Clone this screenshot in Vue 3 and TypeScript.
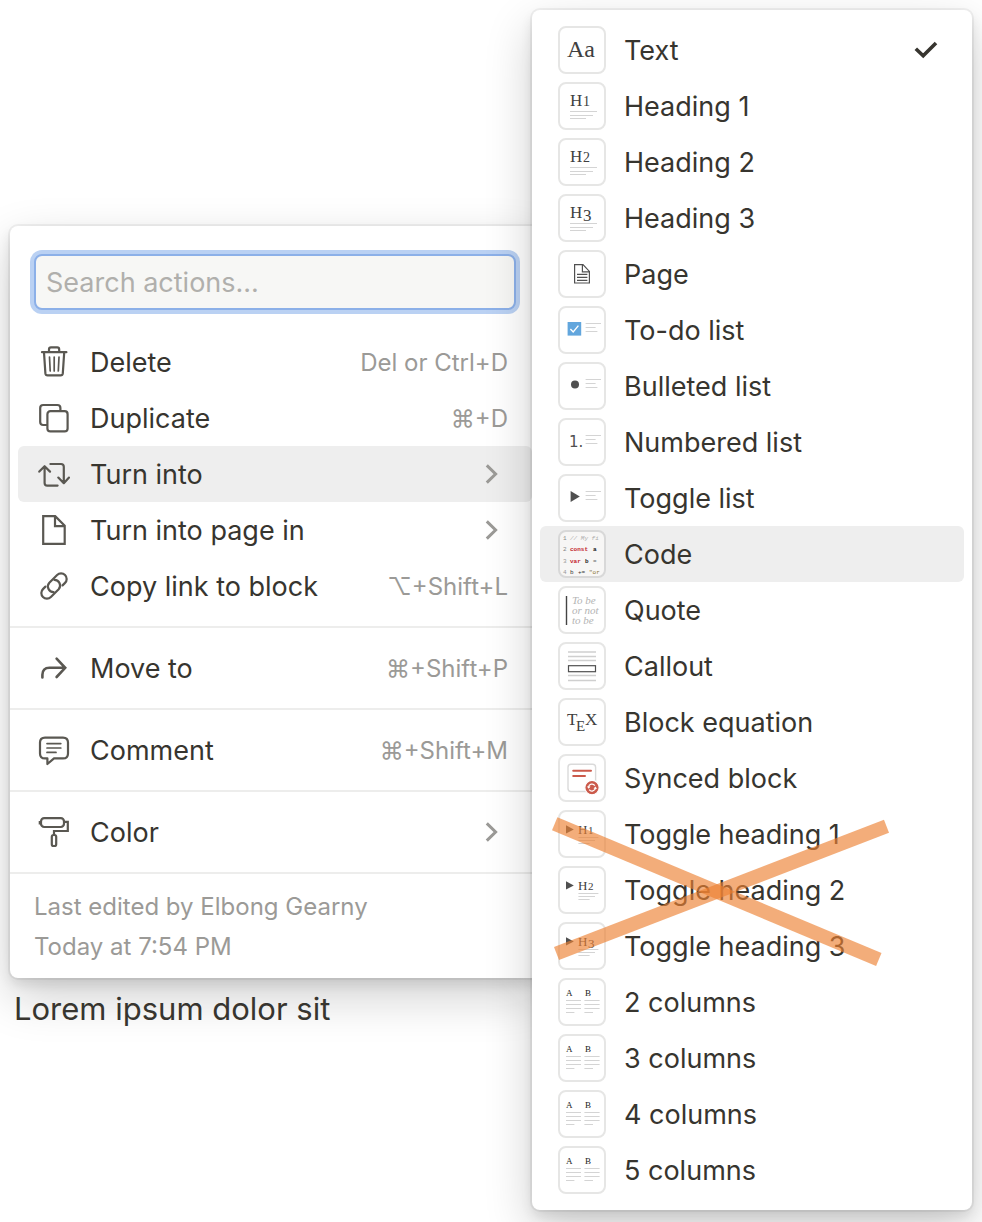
<script setup lang="ts">
import { ref } from 'vue'

interface Action {
  id: string
  label: string
  hint?: string
  submenu?: boolean
}

interface BlockType {
  label: string
  icon: string
  mark?: string
}

const query = ref('')
const openAction = ref('turn')
const selected = ref('Text')
const hovered = ref('Code')

const sections: Action[][] = [
  [
    { id: 'delete', label: 'Delete', hint: 'Del or Ctrl+D' },
    { id: 'duplicate', label: 'Duplicate', hint: '⌘+D' },
    { id: 'turn', label: 'Turn into', submenu: true },
    { id: 'page', label: 'Turn into page in', submenu: true },
    { id: 'link', label: 'Copy link to block', hint: '⌥+Shift+L' },
  ],
  [{ id: 'move', label: 'Move to', hint: '⌘+Shift+P' }],
  [{ id: 'comment', label: 'Comment', hint: '⌘+Shift+M' }],
  [{ id: 'color', label: 'Color', submenu: true }],
]

const blocks: BlockType[] = [
  { label: 'Text', icon: 'text' },
  { label: 'Heading 1', icon: 'heading', mark: '1' },
  { label: 'Heading 2', icon: 'heading', mark: '2' },
  { label: 'Heading 3', icon: 'heading', mark: '3' },
  { label: 'Page', icon: 'page' },
  { label: 'To-do list', icon: 'todo' },
  { label: 'Bulleted list', icon: 'bullet' },
  { label: 'Numbered list', icon: 'number' },
  { label: 'Toggle list', icon: 'toggle' },
  { label: 'Code', icon: 'code' },
  { label: 'Quote', icon: 'quote' },
  { label: 'Callout', icon: 'callout' },
  { label: 'Block equation', icon: 'tex' },
  { label: 'Synced block', icon: 'synced' },
  { label: 'Toggle heading 1', icon: 'toggleHeading', mark: '1' },
  { label: 'Toggle heading 2', icon: 'toggleHeading', mark: '2' },
  { label: 'Toggle heading 3', icon: 'toggleHeading', mark: '3' },
  { label: '2 columns', icon: 'columns' },
  { label: '3 columns', icon: 'columns' },
  { label: '4 columns', icon: 'columns' },
  { label: '5 columns', icon: 'columns' },
]

const listIcons = ['todo', 'bullet', 'number', 'toggle']
</script>

<template>
  <main class="page">
    <div class="left">
      <section class="panel actions" aria-label="Block actions">
        <input v-model="query" class="search" type="text" placeholder="Search actions..." aria-label="Search actions" />
        <ul v-for="(section, i) in sections" :key="i" class="section">
          <li v-for="a in section" :key="a.id">
            <button type="button" class="row action" :class="{ active: openAction === a.id }" @click="openAction = a.id">
              <svg class="glyph" viewBox="0 0 32 32" aria-hidden="true">
                <g v-if="a.id === 'delete'">
                  <path d="M4 6.2H28.4M11 6V3.4Q11 1.4 13 1.4H19.2Q21.2 1.4 21.2 3.4V6M6 6.5L7.4 27.4Q7.6 29.4 9.6 29.4H22.6Q24.6 29.4 24.8 27.4L26.2 6.5" />
                  <path class="thin" d="M11.5 11L12.2 25M16.2 11V25M21 11L20.3 25" />
                </g>
                <g v-else-if="a.id === 'duplicate'">
                  <path d="M8.5 23H5.2Q2.2 23 2.2 20V6Q2.2 3 5.2 3H19.4Q22.4 3 22.4 6V9" />
                  <rect x="9.4" y="9.2" width="20.2" height="20.2" rx="3" />
                </g>
                <g v-else-if="a.id === 'turn'">
                  <path d="M1.3 13.6L6.6 8.2L12 13.6M6.6 9V25Q6.6 27.6 9.2 27.6H19.6M12.4 6H23Q25.8 6 25.8 8.8V25M20.3 19.6L25.8 25.2L31 19.6" />
                </g>
                <g v-else-if="a.id === 'page'" class="sharp">
                  <path d="M5.2 2.2H17.2L26.7 11.8V29.8H5.2ZM17 2.6V12.2H26.6" />
                </g>
                <g v-else-if="a.id === 'link'" transform="translate(16 16) rotate(-45)">
                  <path d="M6.5 5.6H10A5.6 5.6 0 0 0 10-5.6H-1A5.6 5.6 0 0 0-4.6 4" />
                  <path d="M-6.5-5.6H-10A5.6 5.6 0 0 0-10 5.6H1A5.6 5.6 0 0 0 4.6-4" />
                </g>
                <g v-else-if="a.id === 'move'" class="heavy">
                  <path d="M4.4 25.4V22.8Q4.4 15.8 11.4 15.8H26.6M18.6 6.6L27.2 15.8L18.6 25" />
                </g>
                <g v-else-if="a.id === 'comment'">
                  <path d="M7 3.6H25Q30 3.6 30 8.6V19.4Q30 24.4 25 24.4H16L9.4 30V24.4H7Q2 24.4 2 19.4V8.6Q2 3.6 7 3.6Z" />
                  <path class="thin" d="M9 9.6H22.8M9 14H22.8M9 18.4H18" />
                </g>
                <g v-else>
                  <rect x="3" y="2.2" width="23" height="8.8" rx="3.2" />
                  <path class="sharp" d="M1.8 5V8.4M26.2 5.8H29.8V15H16V19" />
                  <rect x="13.8" y="19" width="4.4" height="11" rx="1.8" />
                </g>
              </svg>
              <span class="label">{{ a.label }}</span>
              <kbd v-if="a.hint" class="hint">{{ a.hint }}</kbd>
              <svg v-if="a.submenu" class="chevron" viewBox="0 0 14 22" aria-hidden="true">
                <path d="M2.8 2.4L11.6 11L2.8 19.6" />
              </svg>
            </button>
          </li>
        </ul>
        <footer class="edited">
          <div>Last edited by Elbong Gearny</div>
          <div>Today at 7:54 PM</div>
        </footer>
      </section>
      <p class="body-text">Lorem ipsum dolor sit</p>
    </div>

    <ul class="panel blocks" aria-label="Turn into">
      <li v-for="b in blocks" :key="b.label" class="block-item">
        <button type="button" class="row block" :class="{ active: hovered === b.label }" @click="selected = b.label">
          <span class="tile" :class="{ shaded: b.icon === 'code' }">
            <svg viewBox="2 2 44 44" aria-hidden="true">
              <g v-if="b.icon === 'text'">
                <text class="serif" x="9" y="31" font-size="24">Aa</text>
              </g>
              <g v-else-if="b.icon === 'heading'">
                <text class="serif" x="12" y="24" font-size="17">H</text>
                <text class="serif" x="25" :y="b.mark === '3' ? 27 : 24" :font-size="b.mark === '3' ? 17 : 14">{{ b.mark }}</text>
                <path class="rule" d="M12 29.5H39M12 33.5H35M12 36.5H28" />
              </g>
              <g v-else-if="b.icon === 'page'">
                <path class="ink" d="M16.6 14.6H25L31.4 21.4V33H16.6ZM24.4 15V21.8H31" />
                <path class="ink" d="M19 24.4H29.4M19 27.4H29.4M19 30.4H29.4" />
              </g>
              <g v-else-if="listIcons.includes(b.icon)">
                <g v-if="b.icon === 'todo'">
                  <rect x="9.6" y="16" width="13.6" height="13.6" fill="#62a6dd" />
                  <path d="M12.4 23L15.2 26L20.4 19.6" fill="none" stroke="#fff" stroke-width="1.4" />
                </g>
                <circle v-else-if="b.icon === 'bullet'" cx="17" cy="22.4" r="4" fill="#505050" />
                <text v-else-if="b.icon === 'number'" class="digit" x="11" y="29" font-size="15">1.</text>
                <path v-else d="M12.6 17V28L21.8 22.5Z" fill="#505050" />
                <path class="rule" d="M27.6 17.5H43M27.6 21.5H37.6M27.6 25.5H39.4" />
              </g>
              <g v-else-if="b.icon === 'code'" class="code">
                <text x="5" y="10"><tspan fill="#888">1</tspan><tspan x="12" fill="#aaa" font-style="italic">// My fi</tspan></text>
                <text x="5" y="21"><tspan fill="#888">2</tspan><tspan x="12" fill="#c4262e" font-weight="bold">const</tspan><tspan x="35" fill="#222" font-weight="bold">a</tspan></text>
                <text x="5" y="33"><tspan fill="#999">3</tspan><tspan x="12" fill="#c4262e" font-weight="bold">var</tspan><tspan x="27" fill="#222" font-weight="bold">b</tspan><tspan x="35" fill="#666">=</tspan></text>
                <text x="5" y="44"><tspan fill="#999">4</tspan><tspan x="12" fill="#333">b</tspan><tspan x="20" fill="#333">+=</tspan><tspan x="31" fill="#8a7430">"or</tspan></text>
              </g>
              <g v-else-if="b.icon === 'quote'">
                <path d="M8.5 10V39" stroke="#444" stroke-width="1.4" />
                <g class="serif verse" font-size="11">
                  <text x="14" y="18">To be</text>
                  <text x="14" y="28">or not</text>
                  <text x="14" y="38">to be</text>
                </g>
              </g>
              <g v-else-if="b.icon === 'callout'">
                <path class="rule bold" d="M10 10H38M10 14.5H38M10 18.5H38M10 33.5H38M10 38.5H38" />
                <rect class="ink" x="10.5" y="23.7" width="27" height="6" />
              </g>
              <g v-else-if="b.icon === 'tex'">
                <text class="serif" y="27" font-size="17"><tspan x="9">T</tspan><tspan x="18" y="33" font-size="15">E</tspan><tspan x="27" y="27">X</tspan></text>
              </g>
              <g v-else-if="b.icon === 'synced'">
                <rect x="10" y="10.3" width="27.6" height="27.2" rx="3" fill="none" stroke="#dadada" stroke-width="1.4" />
                <path d="M15.2 16.8H33M15.2 22H27" stroke="#cb5a4b" stroke-width="2" stroke-linecap="round" />
                <circle cx="34" cy="33.6" r="7.2" fill="#cb5a4b" stroke="#fff" stroke-width="1.2" />
                <path d="M30.6 33.2A3.4 3.4 0 0 1 36.8 31.6M37.4 34A3.4 3.4 0 0 1 31.2 35.6" fill="none" stroke="#fff" stroke-width="1.3" />
                <path d="M28.9 32.4H32.5L30.7 34.8ZM39.1 34.8H35.5L37.3 32.4Z" fill="#fff" />
              </g>
              <g v-else-if="b.icon === 'toggleHeading'">
                <path d="M8 15.2V23.6L15.8 19.4Z" fill="#505050" />
                <text class="serif" x="20" y="24" font-size="13">H</text>
                <text class="serif" x="30" :y="b.mark === '3' ? 26 : 24" :font-size="b.mark === '3' ? 13 : 11">{{ b.mark }}</text>
                <path class="rule" d="M20.4 27.5H40.4M20.4 30.5H37M20.4 33.5H31.6" />
              </g>
              <g v-else>
                <text class="serif letter" x="8" y="18" font-size="9">A</text>
                <text class="serif letter" x="27" y="18" font-size="9">B</text>
                <path class="rule" d="M8 22.5H23M8 26.5H23M8 30.5H23M8 34.5H16.4M26.4 22.5H41.6M26.4 26.5H41.6M26.4 30.5H41.6M26.4 34.5H35" />
              </g>
            </svg>
          </span>
          <span class="label">{{ b.label }}</span>
          <svg v-if="selected === b.label" class="check" viewBox="0 0 24 24" aria-hidden="true">
            <path d="M1.8 10.8L9.2 17.8L22 5" />
          </svg>
        </button>
        <svg v-if="b.label === 'Toggle heading 1'" class="cross" viewBox="0 0 350 168" aria-hidden="true">
          <path d="M14.7 17.8L338.8 153.5" />
          <path d="M16.5 147.5L346.5 20.2" />
        </svg>
      </li>
    </ul>
  </main>
</template>

<style>
body {
  margin: 0;
  background: #fff;
}
</style>

<style scoped>
.page {
  display: grid;
  grid-template-columns: 265fr 216fr;
  align-items: start;
  padding: 10px 10px 12px;
  color: #37352f;
  font-family: Inter, "Liberation Sans", "DejaVu Sans", sans-serif;
  font-size: 27px;
  overflow: hidden;
}

.left {
  padding-top: 216px;
}

.panel {
  background: #fff;
  border-radius: 8px;
  box-shadow:
    0 0 0 2px rgba(15, 15, 15, 0.05),
    0 6px 12px rgba(15, 15, 15, 0.1),
    0 18px 48px rgba(15, 15, 15, 0.2);
}

ul {
  list-style: none;
  margin: 0;
  padding: 0;
}

.actions {
  display: flex;
  flex-direction: column;
  padding-top: 28px;
}

.search {
  height: 56px;
  margin: 0 24px 12px;
  padding: 0 10px;
  box-sizing: border-box;
  border: 2px solid #8cb0e8;
  border-radius: 8px;
  outline: none;
  box-shadow: 0 0 0 4px #bad1f3;
  background: #f7f7f5;
  color: inherit;
  font: inherit;
}

.search::placeholder {
  color: #b0afac;
  opacity: 1;
}

.section {
  padding: 12px 8px;
}

.section + .section,
.edited {
  border-top: 2px solid #ededec;
}

.row {
  display: flex;
  align-items: center;
  width: 100%;
  height: 56px;
  border: 0;
  border-radius: 6px;
  background: none;
  color: inherit;
  font: inherit;
  text-align: left;
  cursor: pointer;
}

.row.active {
  background: #eeeeee;
}

.action {
  gap: 20px;
  padding: 0 24px 0 20px;
}

.block {
  gap: 18px;
  padding: 0 26px 0 18px;
}

.label {
  flex: 1;
  font-weight: 420;
  white-space: nowrap;
}

.hint {
  color: #9b9a97;
  font-family: inherit;
  font-size: 24px;
  white-space: nowrap;
}

.glyph {
  flex: none;
  width: 32px;
  height: 32px;
  fill: none;
  stroke: #5a5852;
  stroke-width: 2.2;
  stroke-linecap: round;
  stroke-linejoin: round;
}

.glyph .thin {
  stroke-width: 1.7;
}

.glyph .heavy {
  stroke-width: 2.6;
  stroke-linejoin: miter;
}

.glyph .sharp {
  stroke-linecap: butt;
  stroke-linejoin: miter;
}

.chevron {
  flex: none;
  width: 14px;
  height: 22px;
  margin-right: 10px;
  fill: none;
  stroke: #9b9a97;
  stroke-width: 3;
}

.edited {
  padding: 13px 24px 11px;
  color: #9b9a97;
  font-size: 24px;
  line-height: 40px;
}

.body-text {
  margin: 8px 4px 0;
  font-size: 31px;
  line-height: 46px;
}

.blocks {
  position: relative;
  margin-left: -8px;
  padding: 12px 8px;
}

.block-item {
  position: relative;
}

.tile {
  flex: none;
  box-sizing: border-box;
  width: 48px;
  height: 48px;
  border: 2px solid #e6e6e5;
  border-radius: 8px;
  background: #fff;
  overflow: hidden;
}

.tile.shaded {
  border-color: #d8d8d8;
  background: #f7f6f5;
}

.tile svg {
  display: block;
  width: 44px;
  height: 44px;
}

.serif {
  font-family: "Liberation Serif", serif;
  fill: #404040;
}

.letter {
  fill: #222;
}

.verse {
  fill: #b4b4b4;
  font-style: italic;
}

.digit {
  font-family: "DejaVu Sans", sans-serif;
  fill: #505050;
}

.code {
  font-family: "Liberation Mono", monospace;
  font-size: 6px;
}

.rule {
  fill: none;
  stroke: #d4d4d4;
  stroke-width: 1;
}

.rule.bold {
  stroke: #cfcfcf;
  stroke-width: 1.4;
}

.ink {
  fill: none;
  stroke: #505050;
  stroke-width: 1.2;
}

.check {
  flex: none;
  width: 24px;
  height: 24px;
  fill: none;
  stroke: #37352f;
  stroke-width: 3.6;
}

.cross {
  position: absolute;
  z-index: 1;
  top: 0;
  left: 0;
  width: 350px;
  height: 168px;
  fill: none;
  stroke: #ed8132;
  stroke-opacity: 0.65;
  stroke-width: 14;
  pointer-events: none;
}
</style>
